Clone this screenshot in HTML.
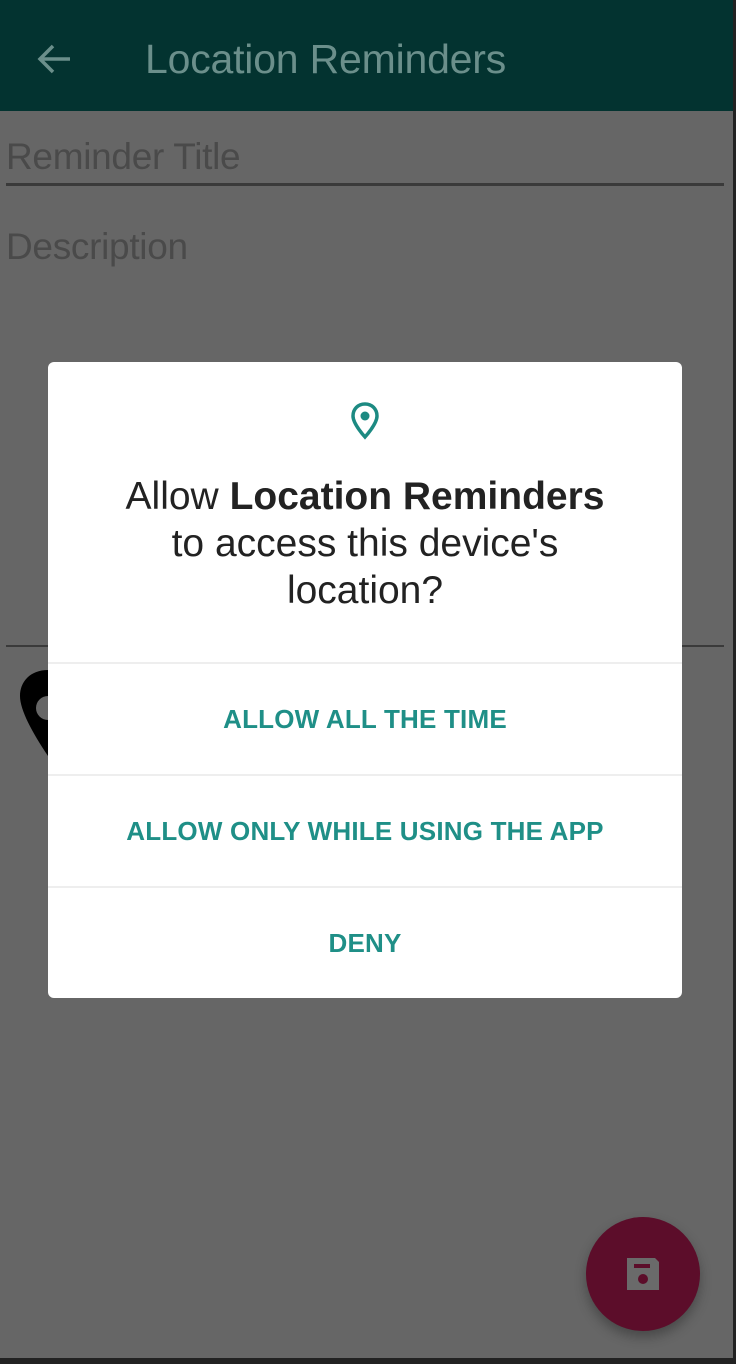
<!DOCTYPE html>
<html><head><style>
html,body{margin:0;padding:0;width:736px;height:1364px;overflow:hidden;background:#666;font-family:"Liberation Sans",sans-serif;position:relative}
.bar{position:absolute;left:0;top:0;width:736px;height:111px;background:#033330}
.bar .t{position:absolute;left:145px;top:36px;color:#6b8f8b;font-size:41px;letter-spacing:-0.2px}
.bar svg{position:absolute;left:36px;top:42px}
.lbl{position:absolute;left:6px;color:#4a4a4a;font-size:37px;letter-spacing:-0.3px}
.line{position:absolute;left:6px;height:3px;background:#3a3a3a}
.dlg{position:absolute;left:48px;top:362px;width:634px;height:636px;background:#fff;border-radius:6px;overflow:hidden}
.q{position:absolute;left:0;width:634px;top:111px;text-align:center;font-size:39px;line-height:47px;color:#222;letter-spacing:0px}
.btn{position:absolute;left:0;width:634px;text-align:center;color:#1f8f87;font-size:26px;font-weight:bold;letter-spacing:0.2px}
.sep{position:absolute;left:0;width:634px;height:2px;background:#eee}
.fab{position:absolute;left:586px;top:1217px;width:114px;height:114px;border-radius:50%;background:#5c0d2a;box-shadow:0 6px 12px rgba(0,0,0,.3)}
</style></head><body>
<div class="bar"><svg width="36" height="34" viewBox="0 0 36 34"><path d="M34 17H5M17 4L4 17l13 13" stroke="#6b8f8b" stroke-width="3.5" fill="none"/></svg><div class="t">Location Reminders</div></div>
<div class="lbl" style="top:136px">Reminder Title</div>
<div class="line" style="top:183px;width:718px"></div>
<div class="lbl" style="top:226px">Description</div>
<div class="line" style="top:645px;width:718px;height:2px"></div>
<svg style="position:absolute;left:18px;top:668px" width="40" height="90" viewBox="0 0 40 90"><path d="M30 2C12 2 2 14 2 28c0 14 12 36 28 60V52a12 12 0 1 1 0-24z" fill="#000"/></svg>
<div style="position:absolute;left:733px;top:0;width:3px;height:1364px;background:#222"></div>
<div style="position:absolute;left:0;top:1358px;width:736px;height:6px;background:#222"></div>
<div class="dlg">
<svg style="position:absolute;left:301px;top:39px" width="32" height="40" viewBox="0 0 32 40"><path d="M16 3C9 3 4 8 4 15c0 8 12 21 12 21s12-13 12-21C28 8 23 3 16 3z" fill="none" stroke="#1c8a82" stroke-width="3.5"/><circle cx="16" cy="15" r="4.5" fill="#1c8a82"/></svg>
<div class="q">Allow <b>Location Reminders</b><br>to access this device's<br>location?</div>
<div class="sep" style="top:300px"></div>
<div class="btn" style="top:342px">ALLOW ALL THE TIME</div>
<div class="sep" style="top:412px"></div>
<div class="btn" style="top:454px">ALLOW ONLY WHILE USING THE APP</div>
<div class="sep" style="top:524px"></div>
<div class="btn" style="top:566px">DENY</div>
</div>
<div class="fab"><svg style="position:absolute;left:38px;top:38px" width="38" height="38" viewBox="0 0 38 38"><path d="M3 3h28l4 4v28H3z" fill="#6a6a6a"/><rect x="10" y="9" width="16" height="4" fill="#5c0d2a"/><circle cx="19" cy="24" r="5" fill="#5c0d2a"/></svg></div>
</body></html>
